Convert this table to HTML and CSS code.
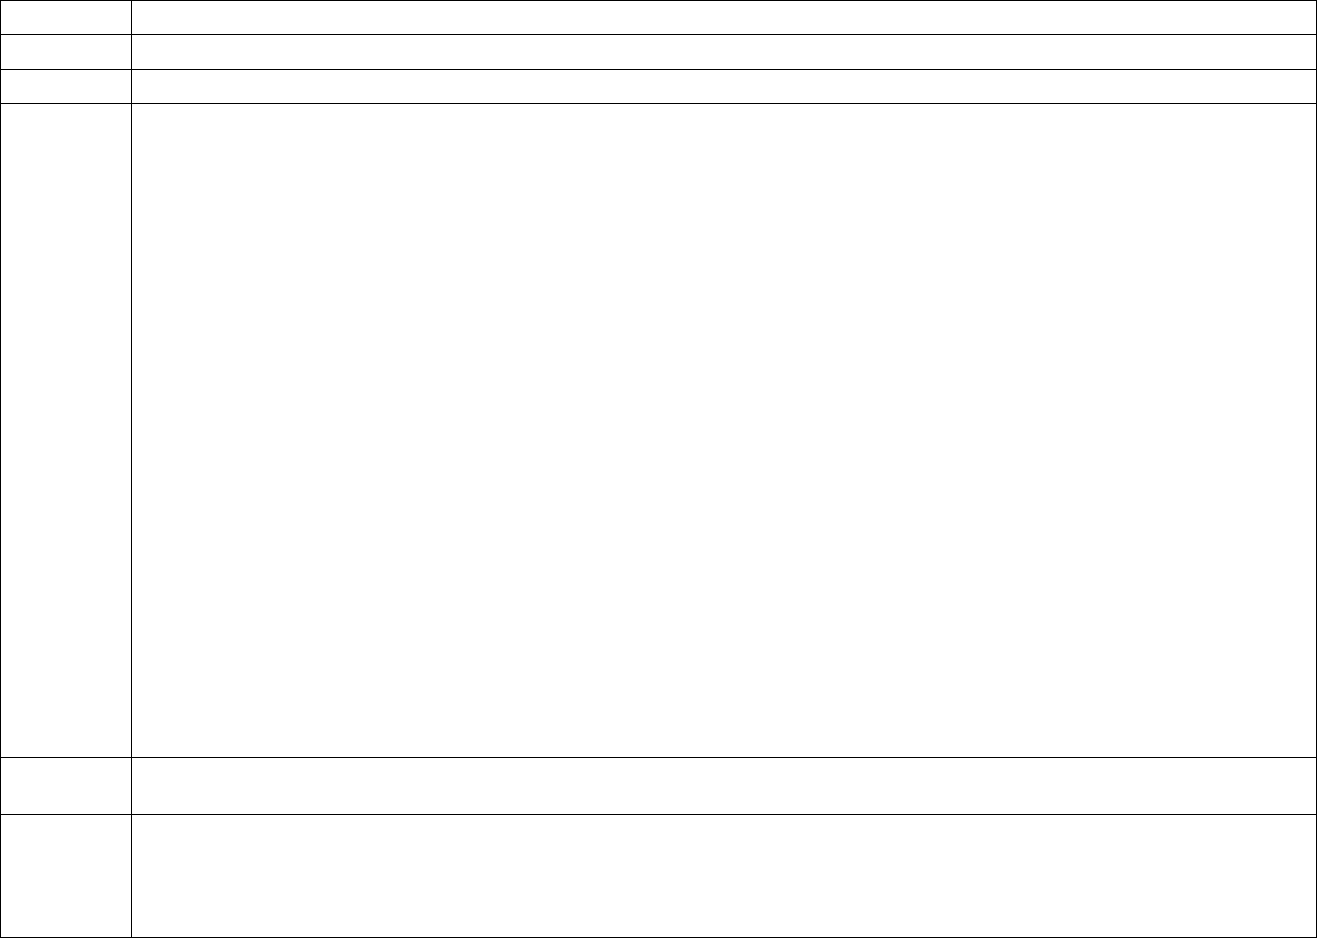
FILE: index.html
```html
<!DOCTYPE html>
<html lang="en">
<head>
    <meta charset="UTF-8">
    <meta name="viewport" content="width=device-width, initial-scale=1.0">
    <title>Layout</title>
    <link rel="stylesheet" href="styles.css">
</head>
<body>
    <table class="grid">
        <tr class="row-1"><td class="label"></td><td></td></tr>
        <tr class="row-2"><td class="label"></td><td></td></tr>
        <tr class="row-3"><td class="label"></td><td></td></tr>
        <tr class="row-4"><td class="label"></td><td></td></tr>
        <tr class="row-5"><td class="label"></td><td></td></tr>
        <tr class="row-6"><td class="label"></td><td></td></tr>
    </table>
</body>
</html>
```

FILE: styles.css
```css
body {
    font-family: Arial, "Liberation Sans", sans-serif;
    background-color: #ffffff;
    margin: 0;
    padding: 0;
}

.grid {
    border-collapse: collapse;
    width: 1317px;
    table-layout: fixed;
}

.grid td {
    border: 1px solid #000;
    padding: 0;
}

.grid .label {
    width: 130px;
}

.row-1 { height: 34px; }
.row-2 { height: 35px; }
.row-3 { height: 34px; }
.row-4 { height: 654px; }
.row-5 { height: 57px; }
.row-6 { height: 123px; }
```
